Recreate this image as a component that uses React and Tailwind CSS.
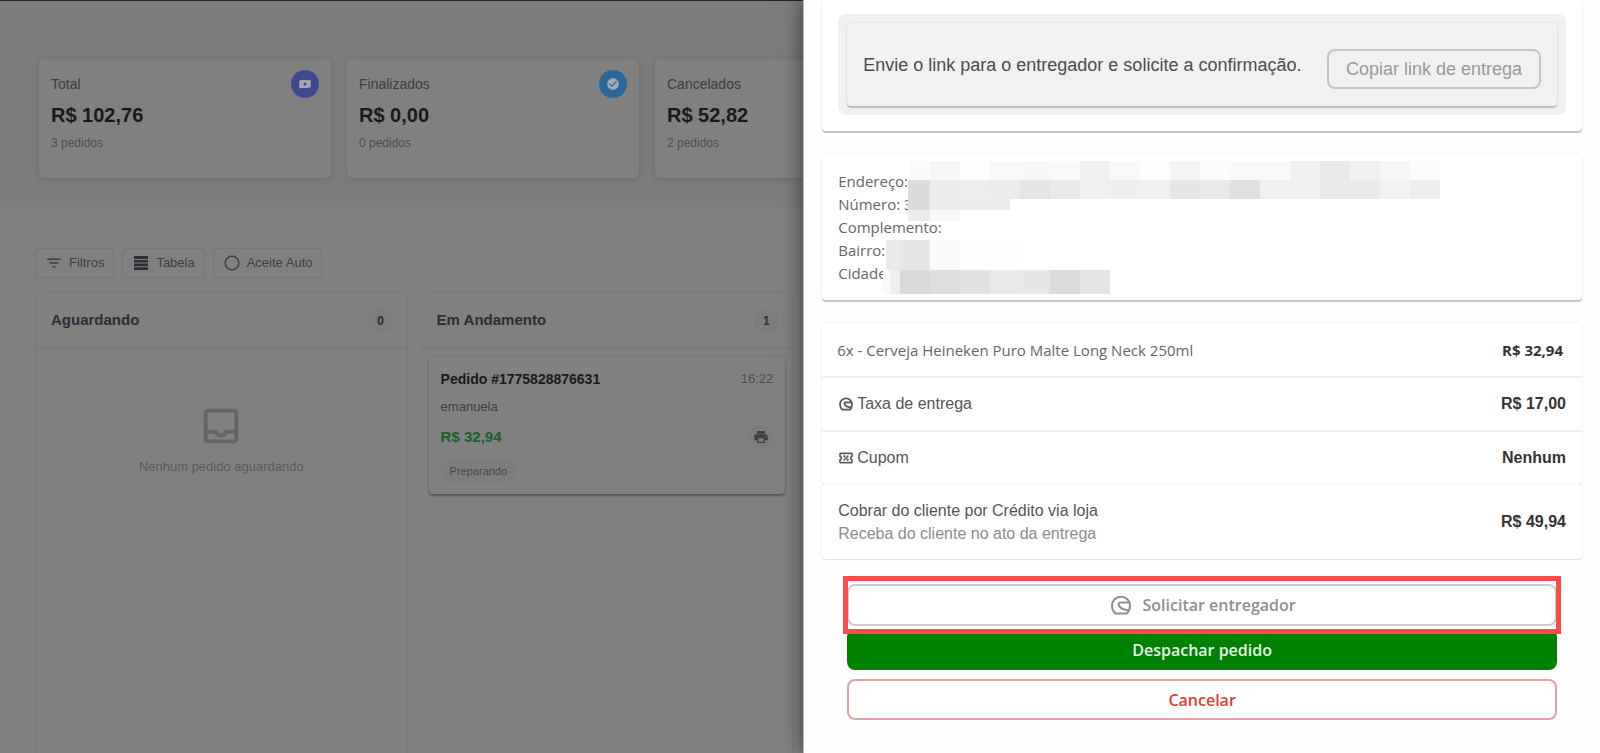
import clsx from "clsx";
import {
  MdCheckCircle,
  MdFilterList,
  MdOutlineInbox,
  MdPrint,
  MdRadioButtonUnchecked,
} from "react-icons/md";

const ARIAL = "font-['Liberation_Sans',Arial,sans-serif]";
const SEGOE = "font-['Open_Sans','Noto_Sans',sans-serif]";

/* ============ ICONS ============ */
function CashIcon() {
  return (
    <svg width="14" height="14" viewBox="0 0 14 14" aria-hidden="true">
      <path fill="#a3a6b4" fillRule="evenodd" d="M2 3.4C5 2.6 8.6 3.6 11.8 2.8c.5-.1.9.2.9.7v6.3c0 .4-.2.7-.6.8-3.2 1-6.8-.2-9.8.7-.5.1-1-.2-1-.7V4.2c0-.4.3-.7.7-.8zM7 5.4a1.5 1.7 0 1 0 0 3.4 1.5 1.7 0 0 0 0-3.4z" />
    </svg>
  );
}

function RowsIcon() {
  return (
    <svg width="18" height="18" viewBox="0 0 18 18" fill="#2b2e32" aria-hidden="true">
      <path d="M2 2h14v3H2zM2 6h14v2.6H2zM2 9.6h14v2.6H2zM2 13.2h14V16H2z" />
    </svg>
  );
}

function HelmetIcon({ size, strokeWidth = 2 }) {
  return (
    <svg width={size} height={size} viewBox="0 0 24 24" fill="none" stroke="currentColor" strokeWidth={strokeWidth} strokeLinejoin="round" aria-hidden="true">
      <path d="M6.5 20.5C4.3 18.8 3 16 3 12.8C3 7.6 7 3.7 12 3.7C17 3.7 21 7.6 21 12.6C21 15.8 20 18.6 18 20.5Z" />
      <path d="M20.6 9.4H11.4C9.8 9.4 9.2 10.6 9.7 11.9C11 15.2 14 17 19.8 17.4" />
    </svg>
  );
}

function CouponIcon() {
  return (
    <svg width="16" height="16" viewBox="0 0 24 24" fill="currentColor" stroke="currentColor" strokeWidth="0.5" aria-hidden="true">
      <path d="M14.8 8L16 9.2L9.2 16L8 14.8L14.8 8M4 4H20C21.11 4 22 4.89 22 6V10C20.9 10 20 10.9 20 12C20 13.11 20.9 14 22 14V18C22 19.11 21.11 20 20 20H4C2.9 20 2 19.11 2 18V14C3.11 14 4 13.11 4 12C4 10.9 3.11 10 2 10V6C2 4.89 2.9 4 4 4M4 6V8.54C5.24 9.26 6 10.57 6 12C6 13.43 5.24 14.75 4 15.46V18H20V15.46C18.76 14.75 18 13.43 18 12C18 10.57 18.76 9.26 20 8.54V6H4M9.5 8C10.33 8 11 8.67 11 9.5C11 10.33 10.33 11 9.5 11C8.67 11 8 10.33 8 9.5C8 8.67 8.67 8 9.5 8M14.5 13C15.33 13 16 13.67 16 14.5C16 15.33 15.33 16 14.5 16C13.67 16 13 15.33 13 14.5C13 13.67 13.67 13 14.5 13Z" />
    </svg>
  );
}

/* ============ BOARD ============ */
const stats = [
  { label: "Total", value: "R$ 102,76", count: "3 pedidos", icon: <CashIcon />, tint: "bg-[#3f4a8e]" },
  { label: "Finalizados", value: "R$ 0,00", count: "0 pedidos", icon: <MdCheckCircle size={14} color="#a0acb6" />, tint: "bg-[#2b6899]" },
  { label: "Cancelados", value: "R$ 52,82", count: "2 pedidos", icon: null, tint: "bg-[#8c4141]" },
];

function StatCard({ label, value, count, icon, tint }) {
  return (
    <div className="w-[292px] h-[119px] shrink-0 rounded-md bg-[#808080] px-3 pt-[11px] shadow-[0_1px_6px_rgba(50,65,65,0.25)]">
      <div className="flex h-7 items-center justify-between">
        <span className="text-sm text-[#3b3e42]">{label}</span>
        <span className={clsx("flex size-7 items-center justify-center rounded-full", tint)}>{icon}</span>
      </div>
      <p className="text-xl leading-[34px] font-bold text-[#17191c]">{value}</p>
      <p className="mt-[3px] text-xs text-[#4b4e52]">{count}</p>
    </div>
  );
}

function ToolButton({ icon, children }) {
  return (
    <button type="button" className="flex h-[30px] items-center gap-1.5 rounded-sm border border-[#757677] px-[9px] text-[13px] text-[#3b3e42]">
      {icon}
      {children}
    </button>
  );
}

function Column({ title, count, children }) {
  return (
    <section className="flex flex-1 flex-col rounded-t-lg border border-b-0 border-[#78797a]">
      <header className="flex h-14 items-center justify-between border-b border-[#747576] pr-[14px] pl-[15px]">
        <h2 className="text-[15px] font-bold text-[#2b2e33]">{title}</h2>
        <span className="flex size-6 items-center justify-center rounded-full border border-[#7a7b7b] bg-[#7c7d7d] text-xs font-bold text-[#2b2e33]">{count}</span>
      </header>
      {children}
    </section>
  );
}

function Board() {
  return (
    <main className={clsx("flex min-w-0 flex-1 flex-col overflow-hidden border-t border-[#242424] bg-[#808080]", ARIAL)}>
      <div className="flex h-[206px] shrink-0 gap-4 bg-[#7c7c7c] pt-[58px] pl-[39px]">
        {stats.map((s) => <StatCard key={s.label} {...s} />)}
      </div>

      <div className="flex gap-2 pt-[41px] pl-[35px]">
        <ToolButton icon={<MdFilterList size={18} />}>Filtros</ToolButton>
        <ToolButton icon={<RowsIcon />}>Tabela</ToolButton>
        <ToolButton icon={<MdRadioButtonUnchecked size={18} />}>Aceite Auto</ToolButton>
      </div>

      <div className="mt-[14px] flex flex-1 gap-[13px] pr-[10px] pl-[35px]">
        <Column title="Aguardando" count={0}>
          <div className="flex flex-col items-center pt-[54px]">
            <MdOutlineInbox size={46} color="#636565" />
            <p className="mt-2 text-[13px] text-[#585b5f]">Nenhum pedido aguardando</p>
          </div>
        </Column>

        <Column title="Em Andamento" count={1}>
          <article className="mx-[7px] mt-2 rounded-sm bg-[#808080] px-3 py-3 shadow-[0_2px_2px_rgba(0,0,0,0.3),0_0_3px_rgba(0,0,0,0.12)]">
            <div className="flex items-center justify-between">
              <h3 className="text-sm font-bold text-[#17191c]">Pedido #1775828876631</h3>
              <time className="text-[13px] text-[#4b4e52]">16:22</time>
            </div>
            <p className="mt-2 text-[13px] leading-5 text-[#3b3e42]">emanuela</p>
            <div className="mt-2 flex items-center justify-between">
              <span className="text-[15px] font-bold text-[#1c612e]">R$ 32,94</span>
              <button type="button" aria-label="Imprimir" className="flex size-6 items-center justify-center rounded-full bg-[#7c7c7c] text-[#3b3e42]">
                <MdPrint size={16} />
              </button>
            </div>
            <span className="mt-3 inline-flex h-5 items-center rounded-full border border-[#797a7a] bg-[#7d7d7d] px-2 text-[11px] text-[#44474b]">Preparando</span>
          </article>
        </Column>
      </div>
    </main>
  );
}

/* ============ ORDER DRAWER ============ */
// [y, height, [[x, width, fill], ...]]
const mosaic = [
  [7, 19, [
    [88, 20, "#fafafa"], [108, 30, "#f6f6f6"], [138, 30, "#fdfdfd"], [168, 30, "#f8f8f8"], [198, 30, "#f7f7f7"], [228, 30, "#f9f9f9"],
    [258, 30, "#f0f0f0"], [288, 30, "#f8f8f8"], [318, 30, "#fdfdfd"], [348, 30, "#f4f4f2"], [378, 30, "#fbfbfb"], [408, 60, "#f8f8f8"],
    [468, 30, "#f0f0f0"], [498, 30, "#e9e9e9"], [528, 30, "#f0f0f0"], [558, 30, "#f6f6f6"], [588, 30, "#fbfbfb"],
  ]],
  [26, 19, [
    [86, 22, "#dbdbdb"], [108, 30, "#ebebeb"], [138, 30, "#ececec"], [168, 30, "#ebebea"], [198, 30, "#e5e5e5"], [228, 30, "#e9e9e7"],
    [258, 30, "#efefef"], [288, 30, "#eeeeec"], [318, 30, "#f0f0f0"], [348, 30, "#e6e6e6"], [378, 30, "#e9e9e7"], [408, 30, "#e0e0e0"],
    [438, 30, "#f0f0ee"], [468, 30, "#efefef"], [498, 30, "#e9e9e9"], [528, 30, "#e9e9e7"], [558, 30, "#f1f1f1"], [588, 30, "#ededed"],
  ]],
  [45, 11, [[86, 22, "#dbdbdb"], [108, 80, "#ebebeb"]]],
  [56, 11, [[86, 22, "#ebebea"], [108, 30, "#f8f8f8"]]],
  [86, 30, [[64, 14, "#e9e9e8"], [78, 30, "#e4e6e8"], [108, 30, "#fafafa"], [138, 57, "#fdfdfd"]]],
  [116, 24, [
    [61, 7, "#fafafa"], [68, 10, "#efefef"], [78, 30, "#dadada"], [108, 30, "#dedede"], [138, 30, "#e2e2e2"], [168, 30, "#e9e9e7"],
    [198, 30, "#e6e8e7"], [228, 30, "#dcdcdc"], [258, 30, "#e2e4e3"],
  ]],
];

const address = ["Endereço: R", "Número: 3", "Complemento:", "Bairro:", "Cidade:"];

const CARD = "rounded-sm bg-white shadow-[0_2px_1px_rgba(0,0,0,0.22),0_0_3px_rgba(0,0,0,0.08)]";
const SOFT_CARD = "rounded-sm bg-white shadow-[0_1px_1px_rgba(0,0,0,0.1),0_0_3px_rgba(0,0,0,0.08)]";

function AddressCard() {
  return (
    <section className={clsx("relative mt-[23px] px-4 pt-4 pb-[15px]", CARD, SEGOE)}>
      {address.map((line) => (
        <p key={line} className="text-[15px] leading-[23px] text-[#666]">{line}</p>
      ))}
      <svg className="absolute top-0 left-0" width="640" height="146" shapeRendering="crispEdges" aria-hidden="true">
        {mosaic.map(([y, h, cells]) =>
          cells.map(([x, w, fill]) => <rect key={`${x}-${y}`} x={x} y={y} width={w} height={h} fill={fill} />)
        )}
      </svg>
    </section>
  );
}

function SummaryRow({ icon, label, value }) {
  return (
    <div className="flex h-[54px] items-center justify-between border-t-2 border-[#f0f0f0] px-4">
      <span className="flex items-center gap-[3px] text-base text-[#555]">
        {icon}
        {label}
      </span>
      <strong className="text-base text-[#333]">{value}</strong>
    </div>
  );
}

function OrderDrawer() {
  return (
    <aside className={clsx("relative z-10 w-[49.8%] shrink-0 overflow-hidden border-l border-[#b5b5b5] bg-[#fefefe] px-[18px] shadow-[0_0_20px_rgba(0,0,0,0.55)]", ARIAL)}>
      <section className={clsx("px-4 pt-[14px] pb-4", CARD)}>
        <div className="rounded-lg bg-[#f0f0f0] p-[9px]">
          <div className="flex h-[83px] items-center justify-between rounded-sm bg-[#f1f1f1] px-4 shadow-[0_2px_1px_rgba(0,0,0,0.2),0_0_3px_rgba(0,0,0,0.1)]">
            <p className="text-lg text-[#4c4c4c]">Envie o link para o entregador e solicite a confirmação.</p>
            <button type="button" className="mt-2 h-10 rounded-lg border-2 border-[#c4c4c4] px-[17px] text-lg leading-none text-[#999]">Copiar link de entrega</button>
          </div>
        </div>
      </section>

      <AddressCard />

      <section className={clsx("mt-[23px]", SOFT_CARD)}>
        <div className={clsx("flex h-[53px] items-center justify-between pt-px pr-[19px] pl-[15px] text-[15px]", SEGOE)}>
          <span className="text-[#666]">6x - Cerveja Heineken Puro Malte Long Neck 250ml</span>
          <strong className="text-[#333]">R$ 32,94</strong>
        </div>
        <SummaryRow icon={<HelmetIcon size={16} strokeWidth={2.6} />} label="Taxa de entrega" value="R$ 17,00" />
        <SummaryRow icon={<CouponIcon />} label="Cupom" value="Nenhum" />
      </section>

      <section className={clsx("flex h-[75px] items-center justify-between px-4", SOFT_CARD)}>
        <div>
          <p className="text-base leading-[23px] text-[#555]">Cobrar do cliente por Crédito via loja</p>
          <p className="text-base leading-[23px] text-[#8c8c8c]">Receba do cliente no ato da entrega</p>
        </div>
        <strong className="text-base text-[#333]">R$ 49,94</strong>
      </section>

      <div className={clsx("mt-[25px] flex flex-col px-[25px] text-base font-semibold", SEGOE)}>
        <div className="relative">
          <button type="button" className="flex h-[42px] w-full items-center justify-center gap-2.5 rounded-lg border-2 border-[#ccc] bg-white text-[#8f8f8f]">
            <HelmetIcon size={24} />
            Solicitar entregador
          </button>
          <div className="pointer-events-none absolute -inset-x-1 -top-2 -bottom-2 border-5 border-[#fd4a4a]" />
        </div>
        <button type="button" className="mt-[3px] h-[41px] rounded-lg bg-[#008000] text-[#e8f5e8]">Despachar pedido</button>
        <button type="button" className="mt-[9px] h-[41px] rounded-lg border-2 border-[#e2a0a0] bg-white text-[#dc3c3c]">Cancelar</button>
      </div>
    </aside>
  );
}

export default function App() {
  return (
    <div className="flex h-screen overflow-hidden bg-[#808080]">
      <Board />
      <OrderDrawer />
    </div>
  );
}
